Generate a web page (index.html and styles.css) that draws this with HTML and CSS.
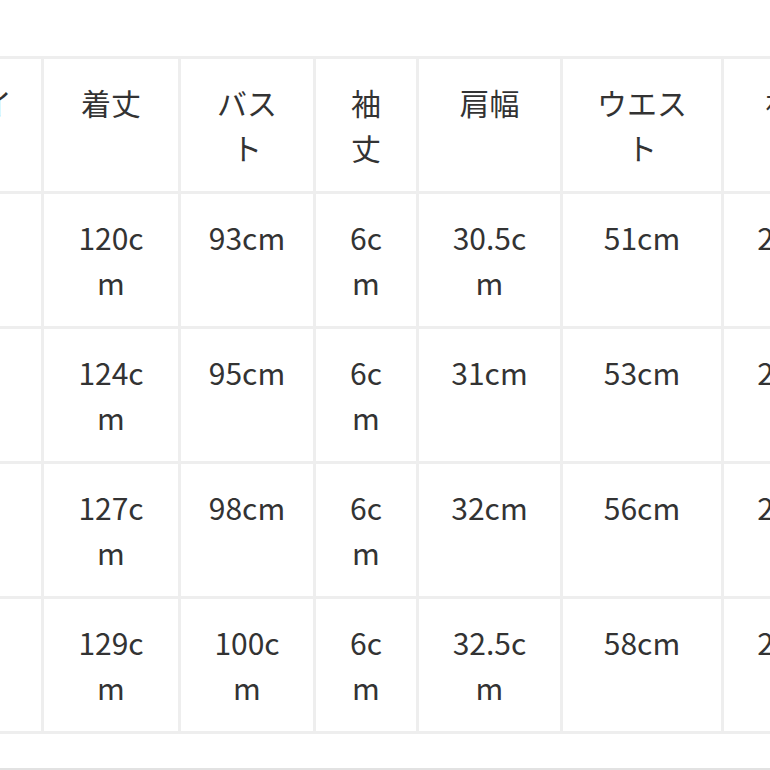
FILE: index.html
```html
<!DOCTYPE html>
<html lang="ja">
<head>
<meta charset="utf-8">
<link rel="stylesheet" href="styles.css">
</head>
<body>
<div class="viewport">
  <table class="size-table">
    <colgroup>
      <col class="c0"><col class="c1"><col class="c2"><col class="c3"><col class="c4"><col class="c5"><col class="c6">
    </colgroup>
    <thead>
      <tr><th>サイズ</th><th>着丈</th><th>バスト</th><th>袖丈</th><th>肩幅</th><th>ウエスト</th><th>裄丈</th></tr>
    </thead>
    <tbody>
      <tr><td>S</td><td>120cm</td><td>93cm</td><td>6cm</td><td>30.5cm</td><td>51cm</td><td>24cm</td></tr>
      <tr><td>M</td><td>124cm</td><td>95cm</td><td>6cm</td><td>31cm</td><td>53cm</td><td>25cm</td></tr>
      <tr><td>L</td><td>127cm</td><td>98cm</td><td>6cm</td><td>32cm</td><td>56cm</td><td>26cm</td></tr>
      <tr><td>XL</td><td>129cm</td><td>100cm</td><td>6cm</td><td>32.5cm</td><td>58cm</td><td>27cm</td></tr>
    </tbody>
  </table>
  <div class="footer-line"></div>
</div>
</body>
</html>
```
FILE: styles.css
```css
html, body {
  margin: 0;
  padding: 0;
  background: #ffffff;
}
.viewport {
  width: 770px;
  height: 770px;
  overflow: hidden;
  padding-top: 56px;
  box-sizing: border-box;
}
.size-table {
  table-layout: fixed;
  border-collapse: collapse;
  margin-left: -80px;
  width: 947px;
  font-family: "Noto Sans CJK JP", "Noto Sans", sans-serif;
  font-size: 30px;
  line-height: 45px;
  color: #333333;
}
.c0 { width: 121px; }
.c1 { width: 137px; }
.c2 { width: 135px; }
.c3 { width: 103px; }
.c4 { width: 144px; }
.c5 { width: 161px; }
.c6 { width: 146px; }
.size-table th,
.size-table td {
  border: 3px solid #eeeeee;
  padding: 21px 24px 21px;
  height: 90px;
  text-align: center;
  vertical-align: top;
  font-weight: 400;
  word-break: break-all;
}
.footer-line {
  height: 34px;
  border-bottom: 2px solid #e2e2e2;
}
```
